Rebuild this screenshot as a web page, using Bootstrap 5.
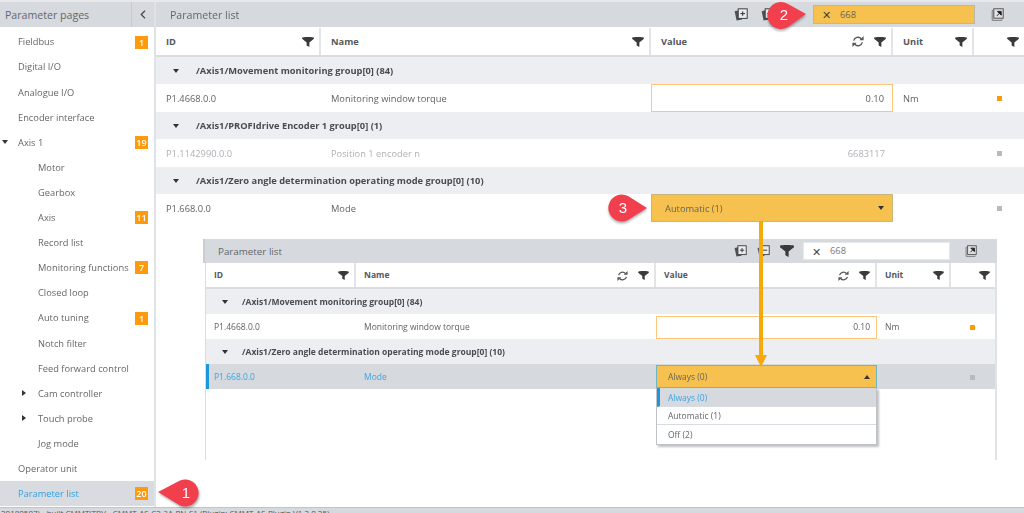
<!DOCTYPE html>
<html lang="en">
<head>
<meta charset="utf-8">
<title>Parameter list</title>
<link href="https://cdn.jsdelivr.net/npm/bootstrap@5.3.0/dist/css/bootstrap.min.css" rel="stylesheet">
<style>
html,body{height:513px;overflow:hidden;background:#fff}
body{font-family:"Open Sans","Noto Sans",sans-serif;font-size:9.3px;color:#5f6266;line-height:1}
.shell{height:513px;border-top:2px solid #e6e8ea;filter:blur(.25px)}
.side{width:156px;flex:none;border-right:2px solid #dfe2e6}
.bar{background:#d6dade;height:25px;flex:none}
.bar-title{font-size:10.6px;color:#63676b;padding-top:2px}
.side-title{padding-left:5px}
.collapse-cell{width:23px;border-left:1px solid #c6cacf}
.tree{padding-top:2px}
.node{height:25.1px;padding:1px 6px 0 18px;color:#666}
.node.deep{padding-left:38px}
.node.on{background:#d8dce1;color:#2f9fe2}
.tw{width:18px;margin-left:-18px;flex:none;display:flex;padding-left:1.5px}
.deep .tw{margin-left:-21px;width:21px;padding-left:4.5px}
.tri-d{width:0;height:0;border:3.5px solid transparent;border-top:4px solid #333;border-bottom:0}
.tri-r{width:0;height:0;border:3.5px solid transparent;border-left:4px solid #333;border-right:0}
.tri-u{width:0;height:0;border:3.5px solid transparent;border-bottom:4px solid #333;border-top:0}
.cnt{width:13px;height:13px;background:#ff9a0d;color:#fff;font-size:9px;font-weight:600;flex:none}
.pane{min-width:0}
.pane-title{padding-left:14px;padding-right:20px;margin-bottom:1px;--ig:13px}
.ico{flex:none;display:block}
.ig{margin-left:var(--ig)}
.tbl{--cid:165px;--cname:330px;--cval:242px;--cunit:81px;--pad:10px;--rowh:27.5px;--headh:28.5px}
.tr{display:flex;align-items:center;height:var(--rowh)}
.th{height:var(--headh);border-bottom:2px solid #d9dce0;font-weight:700;color:#55585c;background:#fff}
.th>div{height:100%;border-right:2px solid #e2e4e7;gap:10px;padding-right:5px!important}
.th>div:last-child{border-right:0}
.td,.th>div{display:flex;align-items:center;padding:1px var(--pad) 0;flex:none}
.w-id{width:var(--cid)}
.w-name{width:var(--cname)}
.w-val{width:var(--cval)}
.w-unit{width:var(--cunit)}
.w-flag{flex:1 1 0!important;min-width:0;justify-content:flex-end}
.grp{background:#eceef2;font-weight:700;color:#4a4c50;padding:1px 0 0 17px}
.grp .tri-d{margin-right:17px}
.muted-row{color:#aeb1b5}
.flag{width:5px;height:5px;background:#ff9a0d;display:block}
.flag.off{background:#b7bbc0}
.val-edit{height:100%;width:var(--cval);flex:none;padding:1px 8px 0;display:flex;align-items:center;justify-content:flex-end;border:1.5px solid #ffc67a;background:#fff}
.val-plain{width:var(--cval);flex:none;padding:1px 8px 0;text-align:right}
.combo{width:var(--cval);height:100%;flex:none;background:#f6c14e;border:1px solid #c8b67c;display:flex;align-items:center;justify-content:space-between;padding:1px 8px 0 13px;color:#66645a}
.flag-cell{justify-content:flex-end;padding-right:22px}
.search{background:#f6c14e;border:1px solid #b9b7a7;width:162px;height:19px;color:#66645a;margin-left:38px;margin-right:16px;padding-left:8px;gap:9px}
.x{font-size:11px;color:#444}
.inner{position:absolute;left:205px;top:237px;width:792px;height:221px}
.inner .bar{height:24px;padding-left:13px;padding-right:20px;border-left:2px solid #c9cdd2;margin-left:-2px;--ig:10px}
.inner .bar-title{font-size:9.8px}
.inner .tbl{--cid:150px;--cname:300px;--cval:221px;--cunit:74px;--pad:8px;--rowh:25px;--headh:26px;width:792px;border-left:1px solid #d9dce0;border-right:2px solid #dfe2e6;height:197px;font-size:8.5px}
.inner .search{background:#fff;border:1px solid #e6e8ea;width:147px;height:18px;margin-left:9px;margin-right:15px;color:#777}
.inner .grp{padding-left:16px}
.inner .grp .tri-d{margin-right:14px}
.inner .val-edit{padding-right:6px;margin-top:1px;height:23px}
.inner .flag-cell{padding-right:20px}
.inner .combo{padding-left:11px}
.picked{background:#d6dade;color:#3ca3e3;border-left:3px solid #1e96dc}
.picked .w-id{width:calc(var(--cid) - 3px);padding-left:5px}
.picked .flag{background:#b7bbc0}
.combo-open{height:23px;border-color:#6fb6c4;position:relative;padding-right:6px}
.drop{position:absolute;left:450px;top:125px;width:221px;background:#fff;border:1px solid #c0c4c8;border-top:0;box-shadow:2px 2px 2px rgba(0,0,0,.25);z-index:2}
.drop-item{height:18.5px;display:flex;align-items:center;padding:2px 0 0 11px;border-bottom:1px solid #d8dbdf;color:#666}
.drop-item:last-child{border-bottom:0}
.drop-item.cur{background:#d6dade;color:#3ca3e3;border-left:3px solid #1e96dc;padding-left:8px}
.overlay{position:absolute;display:block;z-index:5;overflow:visible}
.pin-1{left:158px;top:475px}
.pin-2{left:769px;top:0}
.pin-3{left:607px;top:191px}
.pin-txt{font-family:"Liberation Sans",sans-serif;font-size:15px;fill:#fff;text-anchor:middle}
.status{height:6px;background:#d6dade;border-top:1px solid #bfc4c4;overflow:hidden;font-size:8px;color:#555;padding-left:1px;line-height:9px;white-space:nowrap}
.flow-arrow{left:754px;top:219px;z-index:4}
</style>
</head>
<body>
<svg width="0" height="0" class="position-absolute">
 <defs>
  <symbol id="fn" viewBox="0 0 13 11"><path d="M0 .8C0 .3 2.9 0 6.5 0S13 .3 13 .8V2L8 6v5L5 9.4V6L0 2z" fill="#3a3a3a"/></symbol>
  <symbol id="rf" viewBox="0 0 13 12"><g fill="none" stroke="#555" stroke-width="1.5"><path d="M1.8 5A4.8 4.8 0 0 1 10 3"/><path d="M11.2 7A4.8 4.8 0 0 1 3 9"/></g><path d="M8 4.6h4.6V0zM5 7.4H.4V12z" fill="#555"/></symbol>
  <symbol id="cp" viewBox="0 0 14 13"><path d="M.6 3.2 8 1.6v10L2.6 12.4z" fill="#4d4f52"/><rect x="4.2" y=".8" width="9" height="9.6" fill="#e9ebed" stroke="#3f4144"/><path d="M6.4 5.6h4.6M8.7 3.3v4.6" stroke="#333"/></symbol>
  <symbol id="cm" viewBox="0 0 14 13"><path d="M.6 3.2 8 1.6v10L2.6 12.4z" fill="#4d4f52"/><rect x="4.2" y=".8" width="9" height="9.6" fill="#e9ebed" stroke="#3f4144"/><path d="M6.4 5.6h4.6" stroke="#333"/></symbol>
  <symbol id="pop" viewBox="0 0 13 13"><path d="M2 2.5h-.8v9.8h9.8v-.8" fill="none" stroke="#777"/><rect x="2.8" y=".8" width="9.4" height="9.4" fill="#dfe1e4" stroke="#555"/><path d="M6 7.8 9.4 4.2M6.4 3.4h3.8v3.8z" stroke="#222" fill="#222"/></symbol>
 </defs>
</svg>

<div class="shell d-flex flex-column">
 <div class="d-flex flex-grow-1 position-relative" style="min-height:0">
  <aside class="side d-flex flex-column">
   <div class="bar d-flex align-items-stretch justify-content-between">
    <div class="bar-title side-title d-flex align-items-center">Parameter pages</div>
    <div class="collapse-cell d-flex align-items-center justify-content-center">
     <svg class="ico" width="6" height="9" viewBox="0 0 6 9"><path d="M5 .8 1.2 4.5 5 8.2" fill="none" stroke="#444" stroke-width="1.2"/></svg>
    </div>
   </div>
   <div class="tree flex-grow-1 d-flex flex-column">
    <div class="node d-flex align-items-center justify-content-between"><span>Fieldbus</span><span class="cnt d-flex align-items-center justify-content-center">1</span></div>
    <div class="node d-flex align-items-center"><span>Digital I/O</span></div>
    <div class="node d-flex align-items-center"><span>Analogue I/O</span></div>
    <div class="node d-flex align-items-center"><span>Encoder interface</span></div>
    <div class="node d-flex align-items-center"><span class="tw"><i class="tri-d"></i></span><span class="flex-grow-1">Axis 1</span><span class="cnt d-flex align-items-center justify-content-center">19</span></div>
    <div class="node deep d-flex align-items-center"><span>Motor</span></div>
    <div class="node deep d-flex align-items-center"><span>Gearbox</span></div>
    <div class="node deep d-flex align-items-center justify-content-between"><span>Axis</span><span class="cnt d-flex align-items-center justify-content-center">11</span></div>
    <div class="node deep d-flex align-items-center"><span>Record list</span></div>
    <div class="node deep d-flex align-items-center justify-content-between"><span>Monitoring functions</span><span class="cnt d-flex align-items-center justify-content-center">7</span></div>
    <div class="node deep d-flex align-items-center"><span>Closed loop</span></div>
    <div class="node deep d-flex align-items-center justify-content-between"><span>Auto tuning</span><span class="cnt d-flex align-items-center justify-content-center">1</span></div>
    <div class="node deep d-flex align-items-center"><span>Notch filter</span></div>
    <div class="node deep d-flex align-items-center"><span>Feed forward control</span></div>
    <div class="node deep d-flex align-items-center"><span class="tw"><i class="tri-r"></i></span><span>Cam controller</span></div>
    <div class="node deep d-flex align-items-center"><span class="tw"><i class="tri-r"></i></span><span>Touch probe</span></div>
    <div class="node deep d-flex align-items-center"><span>Jog mode</span></div>
    <div class="node d-flex align-items-center"><span>Operator unit</span></div>
    <div class="node on d-flex align-items-center justify-content-between"><span>Parameter list</span><span class="cnt d-flex align-items-center justify-content-center">20</span></div>
   </div>
  </aside>

  <main class="pane flex-grow-1 d-flex flex-column">
   <div class="bar pane-title d-flex align-items-center">
    <div class="bar-title flex-grow-1">Parameter list</div>
    <svg class="ico" width="14" height="13"><use href="#cp"/></svg>
    <svg class="ico ig" width="14" height="13"><use href="#cm"/></svg>
    <div class="search d-flex align-items-center"><span class="x">✕</span><span>668</span></div>
    <svg class="ico" width="13" height="13"><use href="#pop"/></svg>
   </div>
   <div class="tbl">
    <div class="tr th">
     <div class="w-id justify-content-between"><span>ID</span><svg class="ico" width="12" height="10"><use href="#fn"/></svg></div>
     <div class="w-name justify-content-between"><span>Name</span><svg class="ico" width="12" height="10"><use href="#fn"/></svg></div>
     <div class="w-val"><span class="flex-grow-1">Value</span><svg class="ico" width="12" height="11"><use href="#rf"/></svg><svg class="ico" width="12" height="10"><use href="#fn"/></svg></div>
     <div class="w-unit justify-content-between"><span>Unit</span><svg class="ico" width="12" height="10"><use href="#fn"/></svg></div>
     <div class="w-flag"><svg class="ico" width="12" height="10"><use href="#fn"/></svg></div>
    </div>
    <div class="tr grp"><i class="tri-d"></i><span>/Axis1/Movement monitoring group[0] (84)</span></div>
    <div class="tr">
     <div class="td w-id">P1.4668.0.0</div><div class="td w-name">Monitoring window torque</div>
     <div class="val-edit">0.10</div><div class="td w-unit">Nm</div><div class="td w-flag flag-cell"><i class="flag"></i></div>
    </div>
    <div class="tr grp"><i class="tri-d"></i><span>/Axis1/PROFIdrive Encoder 1 group[0] (1)</span></div>
    <div class="tr muted-row">
     <div class="td w-id">P1.1142990.0.0</div><div class="td w-name">Position 1 encoder n</div>
     <div class="val-plain">6683117</div><div class="td w-unit"></div><div class="td w-flag flag-cell"><i class="flag off"></i></div>
    </div>
    <div class="tr grp"><i class="tri-d"></i><span>/Axis1/Zero angle determination operating mode group[0] (10)</span></div>
    <div class="tr">
     <div class="td w-id">P1.668.0.0</div><div class="td w-name">Mode</div>
     <div class="combo"><span>Automatic (1)</span><i class="tri-d"></i></div><div class="td w-unit"></div><div class="td w-flag flag-cell"><i class="flag off"></i></div>
    </div>
   </div>

   <section class="inner">
    <div class="bar d-flex align-items-center">
     <div class="bar-title flex-grow-1">Parameter list</div>
     <svg class="ico" width="13" height="12"><use href="#cp"/></svg>
     <svg class="ico ig" width="13" height="12"><use href="#cm"/></svg>
     <svg class="ico ig" width="14" height="12"><use href="#fn"/></svg>
     <div class="search d-flex align-items-center"><span class="x">✕</span><span>668</span></div>
     <svg class="ico" width="12" height="12"><use href="#pop"/></svg>
    </div>
    <div class="tbl position-relative">
     <div class="tr th">
      <div class="w-id justify-content-between"><span>ID</span><svg class="ico" width="11" height="9"><use href="#fn"/></svg></div>
      <div class="w-name"><span class="flex-grow-1">Name</span><svg class="ico" width="11" height="10"><use href="#rf"/></svg><svg class="ico" width="11" height="9"><use href="#fn"/></svg></div>
      <div class="w-val"><span class="flex-grow-1">Value</span><svg class="ico" width="11" height="10"><use href="#rf"/></svg><svg class="ico" width="11" height="9"><use href="#fn"/></svg></div>
      <div class="w-unit justify-content-between"><span>Unit</span><svg class="ico" width="11" height="9"><use href="#fn"/></svg></div>
      <div class="w-flag"><svg class="ico" width="11" height="9"><use href="#fn"/></svg></div>
     </div>
     <div class="tr grp"><i class="tri-d"></i><span>/Axis1/Movement monitoring group[0] (84)</span></div>
     <div class="tr">
      <div class="td w-id">P1.4668.0.0</div><div class="td w-name">Monitoring window torque</div>
      <div class="val-edit">0.10</div><div class="td w-unit">Nm</div><div class="td w-flag flag-cell"><i class="flag"></i></div>
     </div>
     <div class="tr grp"><i class="tri-d"></i><span>/Axis1/Zero angle determination operating mode group[0] (10)</span></div>
     <div class="tr picked">
      <div class="td w-id">P1.668.0.0</div><div class="td w-name">Mode</div>
      <div class="combo combo-open"><span>Always (0)</span><i class="tri-u"></i></div><div class="td w-unit"></div><div class="td w-flag flag-cell"><i class="flag"></i></div>
     </div>
     <div class="drop">
      <div class="drop-item cur">Always (0)</div>
      <div class="drop-item">Automatic (1)</div>
      <div class="drop-item">Off (2)</div>
     </div>
    </div>
   </section>
  </main>

  <svg class="overlay flow-arrow" width="14" height="148" viewBox="0 0 14 148"><path d="M5 0h4v134h4l-6 12-6-12h4z" fill="#f5a90a"/></svg>
  <svg class="overlay pin-1" width="50" height="32" viewBox="0 0 50 32"><path d="M0 15 22 3.5a13.5 13.5 0 1 1 0 25z" fill="#f13f4e" filter="drop-shadow(1px 2px 1px rgba(0,0,0,.3))"/><text class="pin-txt" x="28" y="21">1</text></svg>
  <svg class="overlay pin-2" width="42" height="32" viewBox="0 0 42 32"><path d="M37 12 19 2a13.5 13.5 0 1 0 0 23z" fill="#f13f4e" filter="drop-shadow(0 2px 1px rgba(0,0,0,.3))"/><text class="pin-txt" x="15" y="18">2</text></svg>
  <svg class="overlay pin-3" width="44" height="34" viewBox="0 0 44 34"><path d="M40 15 21 3a13.5 13.5 0 1 0 0 24z" fill="#f13f4e" filter="drop-shadow(0 2px 1px rgba(0,0,0,.3))"/><text class="pin-txt" x="16" y="20">3</text></svg>
 </div>
 <footer class="status flex-shrink-0">20180507) - built CMMT(TBV - CMMT-AS-C2-3A-PN-S1 (Plugin: CMMT-AS-Plugin V1.2.0.25)</footer>
</div>
<script src="https://cdn.jsdelivr.net/npm/bootstrap@5.3.0/dist/js/bootstrap.bundle.min.js"></script>
</body>
</html>
